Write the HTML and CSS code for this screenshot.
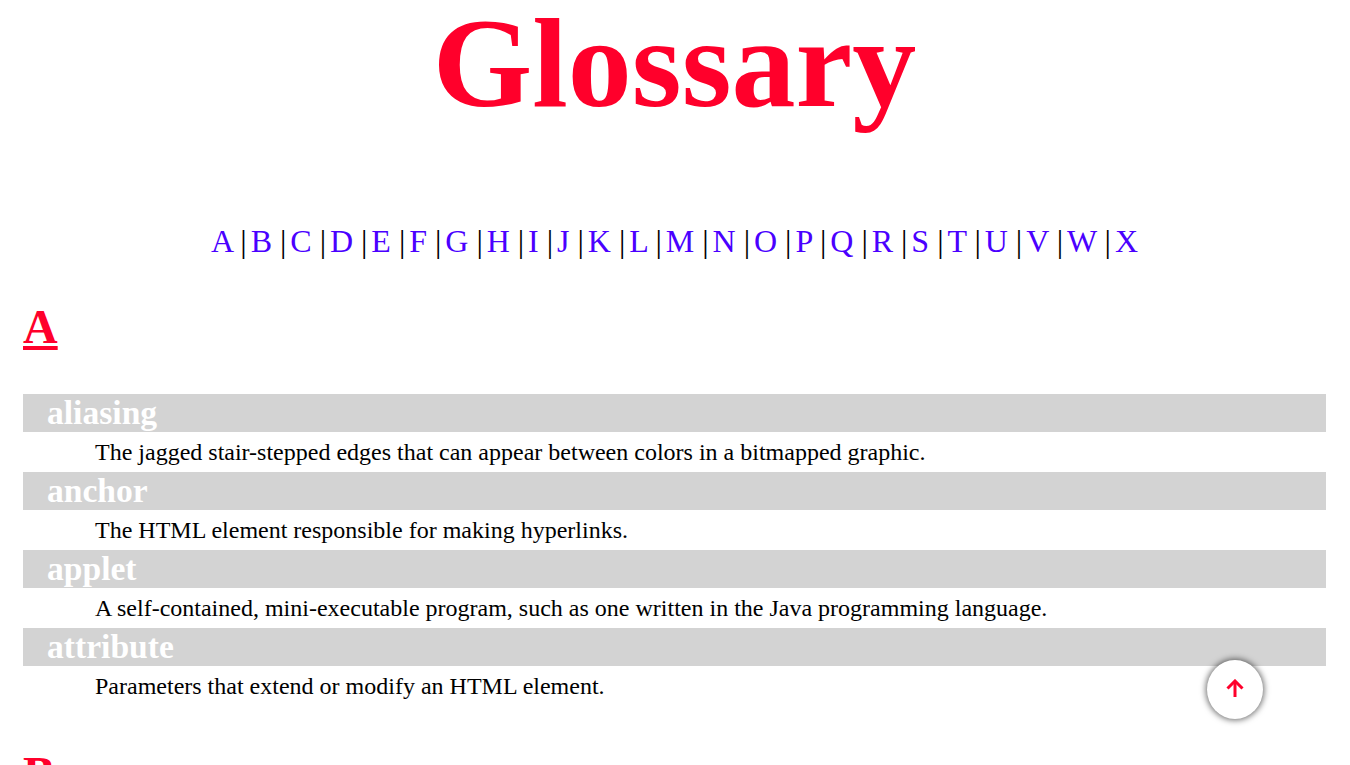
FILE: index.html
```html
<!DOCTYPE html>
<html lang="en">
<head>
  <meta charset="UTF-8">
  <meta name="viewport" content="width=device-width, initial-scale=1.0">
  <title>Glossary</title>
  <link rel="stylesheet" href="styles.css">
</head>
<body>

<h1 class="title">Glossary</h1>

<!-- Letter links -->
<nav class="letters">
  <a href="#a">A</a> |<a href="#b">B</a> |<a href="#">C</a> |<a href="#">D</a> |<a href="#">E</a> |<a href="#">F</a> |<a href="#">G</a> |<a href="#">H</a> |<a href="#">I</a> |<a href="#">J</a> |<a href="#">K</a> |<a href="#">L</a> |<a href="#">M</a> |<a href="#">N</a> |<a href="#">O</a> |<a href="#">P</a> |<a href="#">Q</a> |<a href="#">R</a> |<a href="#">S</a> |<a href="#">T</a> |<a href="#">U</a> |<a href="#">V</a> |<a href="#">W</a> |<a href="#">X</a>
</nav>

<!-- Section A -->
<h2 class="letter-heading" id="a">A</h2>
<dl class="terms">
  <dt>aliasing</dt>
  <dd>The jagged stair-stepped edges that can appear between colors in a bitmapped graphic.</dd>
  <dt>anchor</dt>
  <dd>The HTML element responsible for making hyperlinks.</dd>
  <dt>applet</dt>
  <dd>A self-contained, mini-executable program, such as one written in the Java programming language.</dd>
  <dt>attribute</dt>
  <dd>Parameters that extend or modify an HTML element.</dd>
</dl>

<!-- Section B -->
<h2 class="letter-heading" id="b">B</h2>

<a class="to-top" href="#" aria-label="Back to top">
  <svg width="18" height="18" viewBox="0 0 18 18" fill="none" stroke="#ff002b" stroke-width="3">
    <path d="M9 18V2"/>
    <path d="M1.5 9.5L9 2l7.5 7.5"/>
  </svg>
</a>

</body>
</html>
```

FILE: styles.css
```css
html, body {
  height: 100vh;
  overflow: hidden;
}

body {
  font-family: 'Liberation Serif', 'Times New Roman', serif;
  background-color: #fff;
  color: #000;
  margin: 0;
  padding: 0 24px 0 23px;
}

.title {
  font-size: 128px;
  line-height: 126px;
  font-weight: bold;
  color: #ff002b;
  text-align: center;
  margin: 0 0 97px;
}

.letters {
  font-size: 32px;
  text-align: center;
}

.letters a {
  color: #4a00ff;
  text-decoration: none;
}

.letters a + a {
  margin-left: 3.9px;
}

.letter-heading {
  font-size: 48px;
  font-weight: bold;
  color: #ff002b;
  text-decoration: underline;
  margin: 39px 0 40px;
}

.terms {
  margin: 0 0 40px;
}

.terms dt {
  background-color: #d3d3d3;
  color: #fff;
  font-size: 33.6px;
  font-weight: bold;
  padding-left: 24px;
}

.terms dd {
  font-size: 24.015px;
  margin-left: 72px;
  padding: 7px 0 6px;
}

.to-top {
  position: fixed;
  left: 1207px;
  top: 660px;
  width: 56px;
  height: 59px;
  box-sizing: border-box;
  padding-bottom: 4px;
  border-radius: 50%;
  background-color: #fff;
  box-shadow: 0 0 6px 1px rgba(0, 0, 0, 0.6);
  display: flex;
  align-items: center;
  justify-content: center;
}
```
